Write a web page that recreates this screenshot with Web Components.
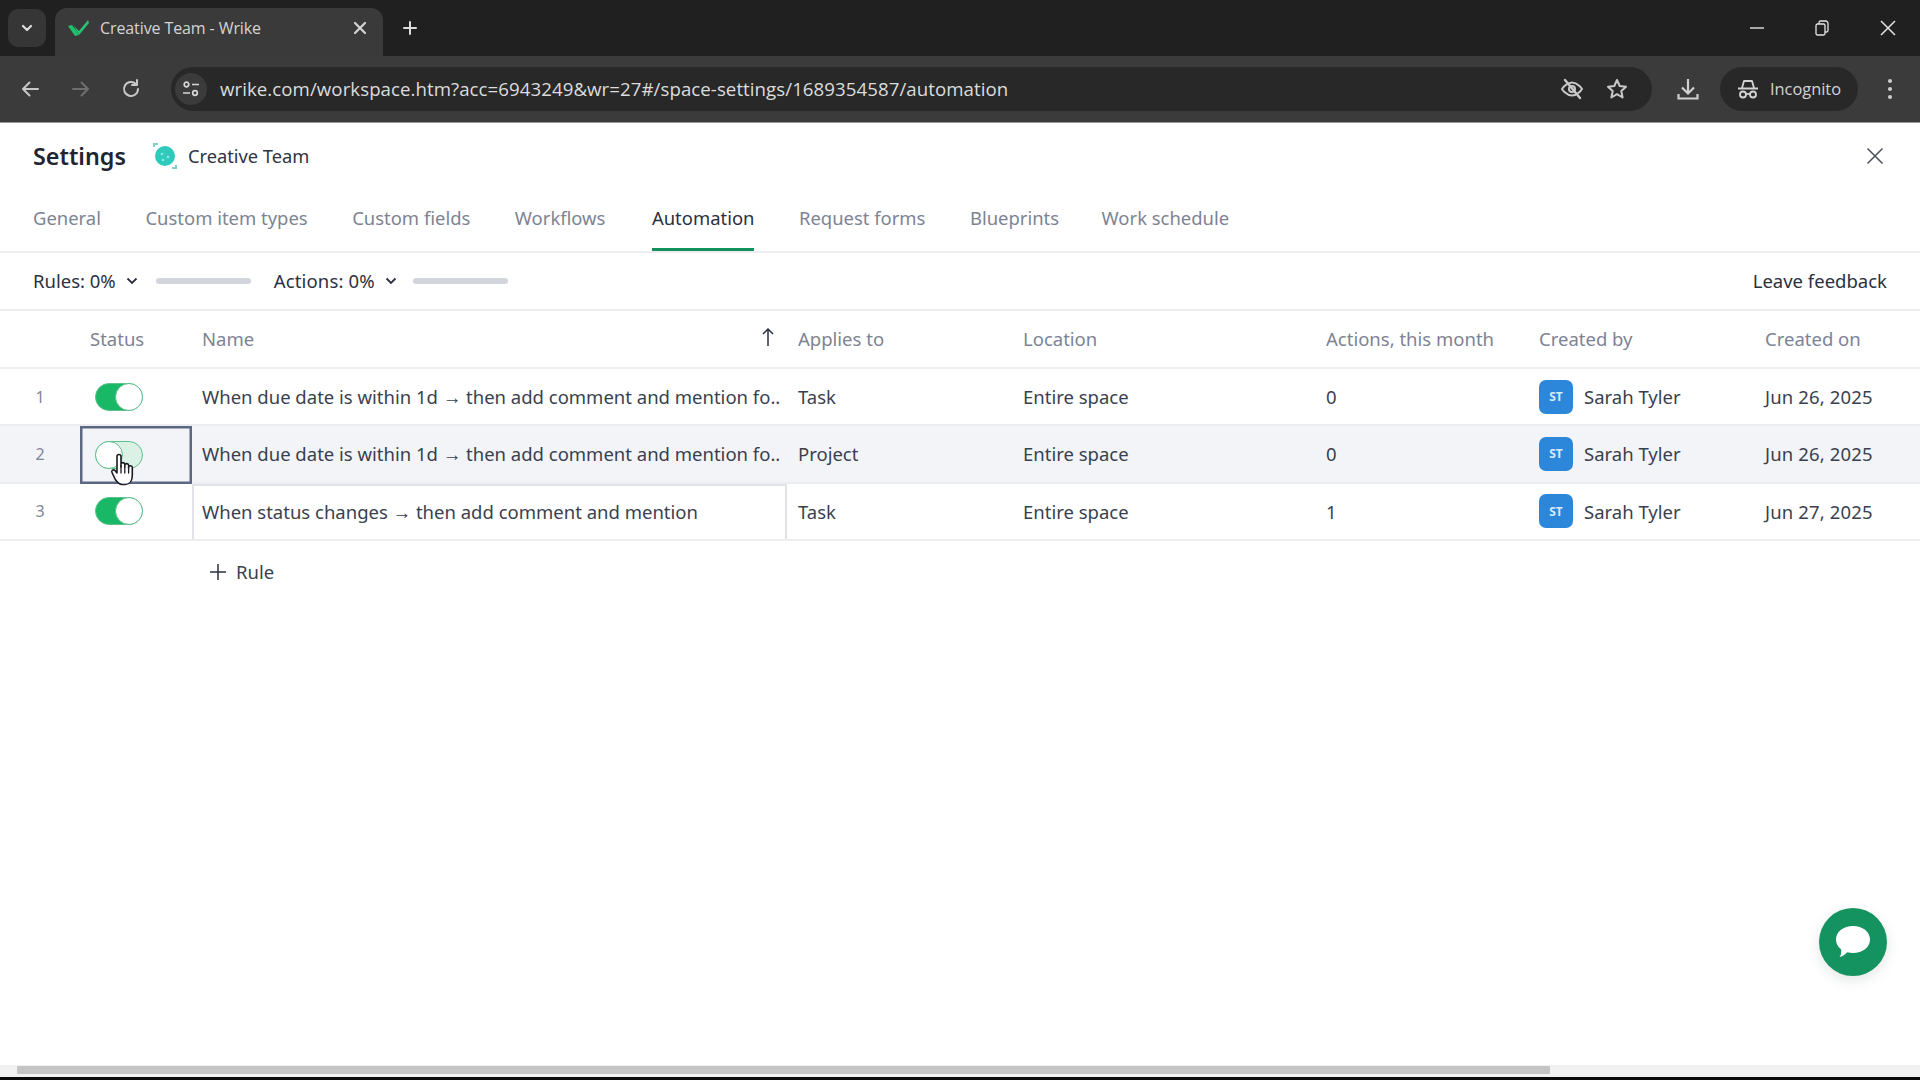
<!DOCTYPE html>
<html lang="en">
<head>
<meta charset="utf-8">
<title>Creative Team - Wrike</title>
<style>
  html, body { margin: 0; height: 100%; background: #fff; }
  body {
    width: 1920px; height: 1080px; overflow: hidden; position: relative;
    display: flex; flex-direction: column;
    font-family: "Noto Sans", "Open Sans", sans-serif;
    --cols: 80px 112px 595px 225px 304px 213px 226px 165px;
  }
</style>
</head>
<body>
<browser-chrome></browser-chrome>
<settings-header></settings-header>
<tab-nav></tab-nav>
<filter-bar></filter-bar>
<rules-table>
  <rule-row num="1" applies="Task" actions="0" date="Jun 26, 2025" state="on">When due date is within 1d → then add comment and mention fo..</rule-row>
  <rule-row num="2" applies="Project" actions="0" date="Jun 26, 2025" state="fading" hover>When due date is within 1d → then add comment and mention fo..</rule-row>
  <rule-row num="3" applies="Task" actions="1" date="Jun 27, 2025" state="on" boxed>When status changes → then add comment and mention</rule-row>
</rules-table>
<add-rule></add-rule>
<chat-fab></chat-fab>
<page-scrollbar></page-scrollbar>

<script>
'use strict';

// small helper, every element gets the same open shadow setup
class Base extends HTMLElement {
	render(html) {
		this.attachShadow({mode: 'open'}).innerHTML = html;
	}
}

const ic = 'fill="none" stroke="currentColor" stroke-width="2" stroke-linecap="round" stroke-linejoin="round"';

// browser chrome - tab strip and address bar

class BrowserChrome extends Base {
	connectedCallback() {
		this.render(`
      <style>
        :host { display: block; flex: none; background: #202020; color: #c9c9c9;
          font-family: "Open Sans", "Noto Sans", sans-serif; }
        svg { display: block; flex: none; }
        .strip { height: 56px; display: flex; align-items: flex-end; position: relative; }
        .list { width: 38px; height: 38px; margin: 0 9px 9px 8px; border-radius: 10px; background: #363636;
          display: flex; align-items: center; justify-content: center; color: #ddd; }
        .tab { width: 328px; height: 48px; box-sizing: border-box; background: #3a3a3a; border-radius: 12px 12px 0 0;
          display: flex; align-items: center; padding: 0 16px 8px 12px; font-size: 16px; color: #d4d4d4; }
        .tab span { margin-left: 9px; flex: 1; letter-spacing: -0.1px; }
        .plus { margin: 0 0 20px 19px; color: #ddd; }
        .win { margin-left: auto; display: flex; align-items: center; height: 56px; align-self: flex-start; color: #e4e4e4; }
        .win svg { margin-right: 51px; }
        .win svg:last-child { margin-right: 24px; }
        .bar { height: 67px; box-sizing: border-box; background: #3b3b3b; border-bottom: 1px solid #9a9a9a;
          display: flex; align-items: center; padding-left: 20px; }
        .nav { margin-right: 29px; color: #c8c8c8; }
        .nav.off { margin-left: 2px; color: #6f6f6f; }
        .url { width: 1481px; height: 44px; background: #282828; border-radius: 22px; display: flex; align-items: center;
          box-sizing: border-box; padding: 0 23px 0 4px; }
        .site { width: 32px; height: 32px; border-radius: 50%; background: #3b3b3b; display: flex; align-items: center; justify-content: center;
          margin-right: 13px; }
        .addr { flex: 1; font-size: 18.660px; color: #dcdcdc; white-space: nowrap; letter-spacing: 0.06px; padding-bottom: 2px; }
        .dl { margin-left: 24px; }
        .inc { width: 138px; height: 44px; margin-left: 20px; background: #282828; border-radius: 22px; display: flex; align-items: center;
          justify-content: center; gap: 11px; font-size: 16.400px; color: #d4d4d4; }
        .inc span { padding-bottom: 2px; }
        .dots { margin-left: 29px; }
      </style>
      <div class="strip">
        <div class="list"><svg width="14" height="14" viewBox="0 0 14 14" ${ic}><path d="M3 5l4 4 4-4" stroke-width="2.2"/></svg></div>
        <div class="tab">
          <svg width="24" height="20" viewBox="0 0 24 20"><path d="M1 8l4-1 4 5 3 5-4 1z" fill="#1fbf6c"/><path d="M7 8l5 5 9-11 1 3-10 12z" fill="#27c274"/></svg>
          <span>Creative Team - Wrike</span>
          <svg width="14" height="14" viewBox="0 0 14 14" ${ic}><path d="M2 2l10 10M12 2L2 12" stroke-width="2.2"/></svg>
        </div>
        <svg class="plus" width="16" height="16" viewBox="0 0 16 16" ${ic}><path d="M8 2v12M2 8h12" stroke-width="2"/></svg>
        <div class="win">
          <svg width="14" height="14" viewBox="0 0 14 14" fill="none" stroke="currentColor" stroke-width="1.4"><path d="M0 7h14"/></svg>
          <svg width="14" height="16" viewBox="0 0 14 16" fill="none" stroke="currentColor" stroke-width="1.3"><rect x="1" y="4" width="9" height="11" rx="1.5"/><path d="M4 4V2.5A1.5 1.5 0 0 1 5.500 1h5A2.500 2.500 0 0 1 13 3.500v7a1.500 1.500 0 0 1-1.500 1.500H10"/></svg>
          <svg width="16" height="16" viewBox="0 0 16 16" fill="none" stroke="currentColor" stroke-width="1.5"><path d="M1 1l14 14M15 1L1 15"/></svg>
        </div>
      </div>
      <div class="bar">
        <svg class="nav" width="20" height="20" viewBox="0 0 20 20" ${ic}><path d="M18 10H3M9.500 3.500L3 10l6.500 6.500"/></svg>
        <svg class="nav off" width="20" height="20" viewBox="0 0 20 20" ${ic}><path d="M2 10h15M10.500 3.500L17 10l-6.500 6.500"/></svg>
        <svg class="nav" width="22" height="22" viewBox="0 0 22 22" ${ic}><path d="M18 11a7 7 0 1 1-2.100-5M17 2v5h-5"/></svg>
        <div class="url">
          <div class="site"><svg width="18" height="18" viewBox="0 0 18 18" fill="none" stroke="#d8d8d8" stroke-width="1.700"><circle cx="4.500" cy="4.500" r="2.300"/><path d="M10 4.500h7M1 13h7"/><circle cx="13" cy="13" r="2.300"/></svg></div>
          <div class="addr">wrike.com/workspace.htm?acc=6943249&amp;wr=27#/space-settings/1689354587/automation</div>
          <svg width="24" height="24" viewBox="0 0 24 24" fill="none" stroke="#c8c8c8" stroke-width="2" stroke-linecap="round"><path d="M2 12s4-6.500 10-6.500S22 12 22 12s-4 6.500-10 6.500S2 12 2 12z"/><circle cx="12" cy="12" r="3"/><path d="M5 3l15 18" stroke-width="2.400"/></svg>
          <svg style="margin-left:21px" width="24" height="24" viewBox="0 0 24 24" fill="none" stroke="#c8c8c8" stroke-width="2" stroke-linejoin="round"><path d="M12 3l2.700 6 6.300.700-4.700 4.300 1.300 6.500L12 17.200 6.400 20.500l1.300-6.500L3 9.700 9.300 9z"/></svg>
        </div>
        <svg class="dl" width="24" height="24" viewBox="0 0 24 24" fill="none" stroke="#d0d0d0" stroke-width="2.200"><path d="M12 2v14M6 10.500l6 6 6-6M2.500 17v4.500h19V17"/></svg>
        <div class="inc">
          <svg width="22" height="22" viewBox="0 0 22 22" fill="none" stroke="#d4d4d4" stroke-width="1.800"><path d="M1 10.500h20M5 10l2-7h8l2 7" stroke-linejoin="round"/><circle cx="6" cy="16.500" r="3"/><circle cx="16" cy="16.500" r="3"/><path d="M9 16h4"/></svg>
          <span>Incognito</span>
        </div>
        <svg class="dots" width="6" height="22" viewBox="0 0 6 22" fill="#cfcfcf"><circle cx="3" cy="3" r="2"/><circle cx="3" cy="11" r="2"/><circle cx="3" cy="19" r="2"/></svg>
      </div>`);
	}
}

// settings title row

class SettingsHeader extends Base {
	connectedCallback() {
		this.render(`
      <style>
        :host { display: flex; flex: none; align-items: center; height: 66px; padding: 0 36px 0 33px; }
        h1 { margin: 0 25px 0 0; font-size: 23.300px; font-weight: 600; color: #1f2433; }
        .space { font-size: 18.300px; color: #2e3342; margin-left: 9px; padding-bottom: 1px; }
        .x { margin-left: auto; color: #4a4f5c; }
        svg { display: block; }
      </style>
      <h1>Settings</h1>
      <svg width="28" height="28" viewBox="0 0 28 28"><circle cx="14" cy="14" r="10" fill="#2fcabc"/><circle cx="11" cy="12" r="1.300" fill="#8fe6dd"/><circle cx="17" cy="15" r="1.300" fill="#8fe6dd"/><circle cx="12" cy="18" r="1.300" fill="#8fe6dd"/><path d="M3 5V2h4M25 23v3h-4" fill="none" stroke="#7fd0c8" stroke-width="2"/></svg>
      <span class="space">Creative Team</span>
      <svg class="x" width="18" height="18" viewBox="0 0 18 18" fill="none" stroke="currentColor" stroke-width="1.500"><path d="M1.500 1.500l15 15M16.500 1.500l-15 15"/></svg>`);
	}
}

class TabNav extends Base {
	connectedCallback() {
		const tabs = ['General', 'Custom item types', 'Custom fields', 'Workflows', 'Automation', 'Request forms', 'Blueprints', 'Work schedule'];
		this.render(`
      <style>
        :host { display: flex; flex: none; height: 64px; box-sizing: border-box; padding-left: 33px; gap: 44.500px; border-bottom: 2px solid #eceef2;
          font-size: 18.450px; color: #7d8394; }
        div { height: 62px; box-sizing: border-box; padding-top: 16px; white-space: nowrap; }
        .on { color: #2b3040; border-bottom: 3px solid #12915f; margin-left: 2px; }
        div:last-child { margin-left: -2px; }
      </style>
      ${tabs.map(t => `<div class="${t === 'Automation' ? 'on' : ''}">${t}</div>`).join('')}`);
	}
}

// usage meters under the tabs

class FilterBar extends Base {
	connectedCallback() {
		const chev = `<svg width="12" height="12" viewBox="0 0 12 12" fill="none" stroke="#2b3040" stroke-width="1.800"><path d="M1.500 3.500L6 8l4.500-4.500"/></svg>`;
		this.render(`
      <style>
        :host { display: flex; flex: none; align-items: center; height: 58px; box-sizing: border-box; padding: 0 33px; border-bottom: 2px solid #eceef2;
          font-size: 18.500px; color: #2b3040; }
        span { padding-bottom: 1px; }
        svg { margin-left: 10px; }
        i { display: block; width: 95px; height: 6px; border-radius: 3px; background: #d3d5dc; margin: 0 23px 0 18px; }
        .act { letter-spacing: 0.15px; }
        .act + svg + i { margin-left: 16px; }
        .fb { margin-left: auto; }
      </style>
      <span>Rules: 0%</span>${chev}<i></i>
      <span class="act">Actions: 0%</span>${chev}<i></i>
      <span class="fb">Leave feedback</span>`);
	}
}

class RulesTable extends Base {
	connectedCallback() {
		this.render(`
      <style>
        :host { display: block; flex: none; font-size: 18.500px; }
        .head { display: grid; grid-template-columns: var(--cols); height: 58px; box-sizing: border-box; border-bottom: 2px solid #eceef2;
          align-items: center; color: #7d8394; padding-bottom: 2px; }
        .head div { padding-left: 10px; white-space: nowrap; }
        .head .name { display: flex; justify-content: space-between; align-items: center; padding-right: 12px; }
        .head .ap, .head .lo { padding-left: 11px; }
        svg { display: block; margin-top: -2px; }
      </style>
      <div class="head">
        <div></div><div>Status</div>
        <div class="name"><span>Name</span><svg width="14" height="20" viewBox="0 0 14 20" fill="none" stroke="#2b3040" stroke-width="1.500"><path d="M7 19V2M2 7l5-5 5 5"/></svg></div>
        <div class="ap">Applies to</div><div class="lo">Location</div><div>Actions, this month</div><div>Created by</div><div>Created on</div>
      </div>
      <slot></slot>`);
	}
}

class RuleRow extends Base {
	connectedCallback() {
		const a = n => this.getAttribute(n);
		this.render(`
      <style>
        :host { display: grid; grid-template-columns: var(--cols); height: 57.330px; box-sizing: border-box; align-items: center;
          border-bottom: 2px solid #eceef2; color: #3a3f4f; }
        :host([hover]) { background: #f3f4f7; }
        .cell { height: 100%; box-sizing: border-box; display: flex; align-items: center; padding-left: 10px; white-space: nowrap; overflow: hidden; }
        .num { justify-content: center; color: #80869a; font-size: 16px; padding: 0; }
        .st { padding-left: 15px; overflow: visible; }
        :host([hover]) .st { box-shadow: inset 0 0 0 2.500px #5c6784; margin-bottom: -2px; height: calc(100% + 2px); position: relative; }
        :host([boxed]) .nm { box-shadow: inset 2px 0 #e2e3e8, inset -2px 0 #e2e3e8, inset 0 2px #e2e3e8; }
        .pl { padding-left: 11px; }
        .dt { letter-spacing: 0.15px; }
      </style>
      <div class="cell num">${a('num')}</div>
      <div class="cell st"><toggle-switch state="${a('state')}"></toggle-switch></div>
      <div class="cell nm"><slot></slot></div>
      <div class="cell pl">${a('applies')}</div>
      <div class="cell pl">Entire space</div>
      <div class="cell">${a('actions')}</div>
      <div class="cell"><user-chip initials="ST">Sarah Tyler</user-chip></div>
      <div class="cell dt">${a('date')}</div>`);
	}
}

class ToggleSwitch extends Base {
	connectedCallback() {
		const fading = this.getAttribute('state') === 'fading';
		this.render(`
      <style>
        :host { display: block; position: relative; width: 48px; height: 28px; flex: none; }
        .track { box-sizing: border-box; width: 100%; height: 100%; border-radius: 14px; border: 1.500px solid #5fc08c; background: ${fading ? '#dcf1e6' : '#19b866'}; }
        .knob { position: absolute; top: 0; ${fading ? 'left: 0' : 'right: 0'}; width: 28px; height: 28px; box-sizing: border-box; border-radius: 50%;
          background: #fff; border: 1.500px solid #5fc08c; }
        .hand { position: absolute; left: 15px; top: 11px; }
      </style>
      <div class="track"></div><div class="knob"></div>
      ${fading ? `<svg class="hand" width="28" height="36" viewBox="0 0 28 36"><path d="M7 4.500a2 2 0 0 1 4 0V15l0-3a2 2 0 0 1 3.800 0v3-2a2 2 0 0 1 3.800 0v3-1a2 2 0 0 1 3.700 0v8.500c0 5-2.500 9-7 9h-3c-3.500 0-5-2-7-5L2 20.500c-1-2 1.500-3.500 3-2l2 2.500z" fill="#fff" stroke="#1b1b22" stroke-width="1.600" stroke-linejoin="round"/><path d="M11 14v7M14.800 15v6M18.600 16v5" stroke="#1b1b22" stroke-width="1.300" stroke-linecap="round"/></svg>` : ''}`);
	}
}

class UserChip extends Base {
	connectedCallback() {
		this.render(`
      <style>
        :host { display: flex; align-items: center; gap: 11px; }
        b { width: 34px; height: 34px; border-radius: 7px; background: #2c86d9; color: #d6ecfb; font-size: 12px; font-weight: 700;
          display: flex; align-items: center; justify-content: center; }
      </style>
      <b>${this.getAttribute('initials')}</b><slot></slot>`);
	}
}

class AddRule extends Base {
	connectedCallback() {
		this.render(`
      <style>
        :host { display: flex; flex: none; align-items: center; gap: 10px; height: 62px; padding-left: 210px; font-size: 18.500px; color: #3a3f4f; }
        svg { display: block; }
      </style>
      <svg width="16" height="16" viewBox="0 0 16 16" stroke="#2b3040" stroke-width="1.500"><path d="M8 0v16M0 8h16"/></svg>
      <span>Rule</span>`);
	}
}

class ChatFab extends Base {
	connectedCallback() {
		this.render(`
      <style>
        :host { position: absolute; left: 1819px; top: 908px; width: 68px; height: 68px; border-radius: 50%; background: #14925f;
          box-shadow: 0 4px 14px rgba(20, 60, 40, .12); display: flex; align-items: center; justify-content: center; }
        svg { display: block; }
      </style>
      <svg width="36" height="34" viewBox="0 0 36 34"><path d="M18 1c9.500 0 17 5.700 17 13.500S27.500 28 18 28c-2 0-4-.300-5.800-.800C10 29.500 7 32 4.500 32c1.500-2 2-4.500 1.700-7.500C3 22 1 18.500 1 14.500 1 6.700 8.500 1 18 1z" fill="#fff"/></svg>`);
	}
}

class PageScrollbar extends Base {
	connectedCallback() {
		this.render(`
      <style>
        :host { position: absolute; left: 0; right: 0; bottom: 0; height: 15px; background: #f1f1f1; border-bottom: 3px solid #0a0a0a; box-sizing: border-box;
          padding-top: 1px; display: block; }
        div { margin-left: 17px; width: 1533px; height: 8px; background: #c4c4c4; border-radius: 1px; }
      </style>
      <div></div>`);
	}
}

customElements.define('browser-chrome', BrowserChrome);
customElements.define('settings-header', SettingsHeader);
customElements.define('tab-nav', TabNav);
customElements.define('filter-bar', FilterBar);
customElements.define('rules-table', RulesTable);
customElements.define('rule-row', RuleRow);
customElements.define('toggle-switch', ToggleSwitch);
customElements.define('user-chip', UserChip);
customElements.define('add-rule', AddRule);
customElements.define('chat-fab', ChatFab);
customElements.define('page-scrollbar', PageScrollbar);
</script>
</body>
</html>
